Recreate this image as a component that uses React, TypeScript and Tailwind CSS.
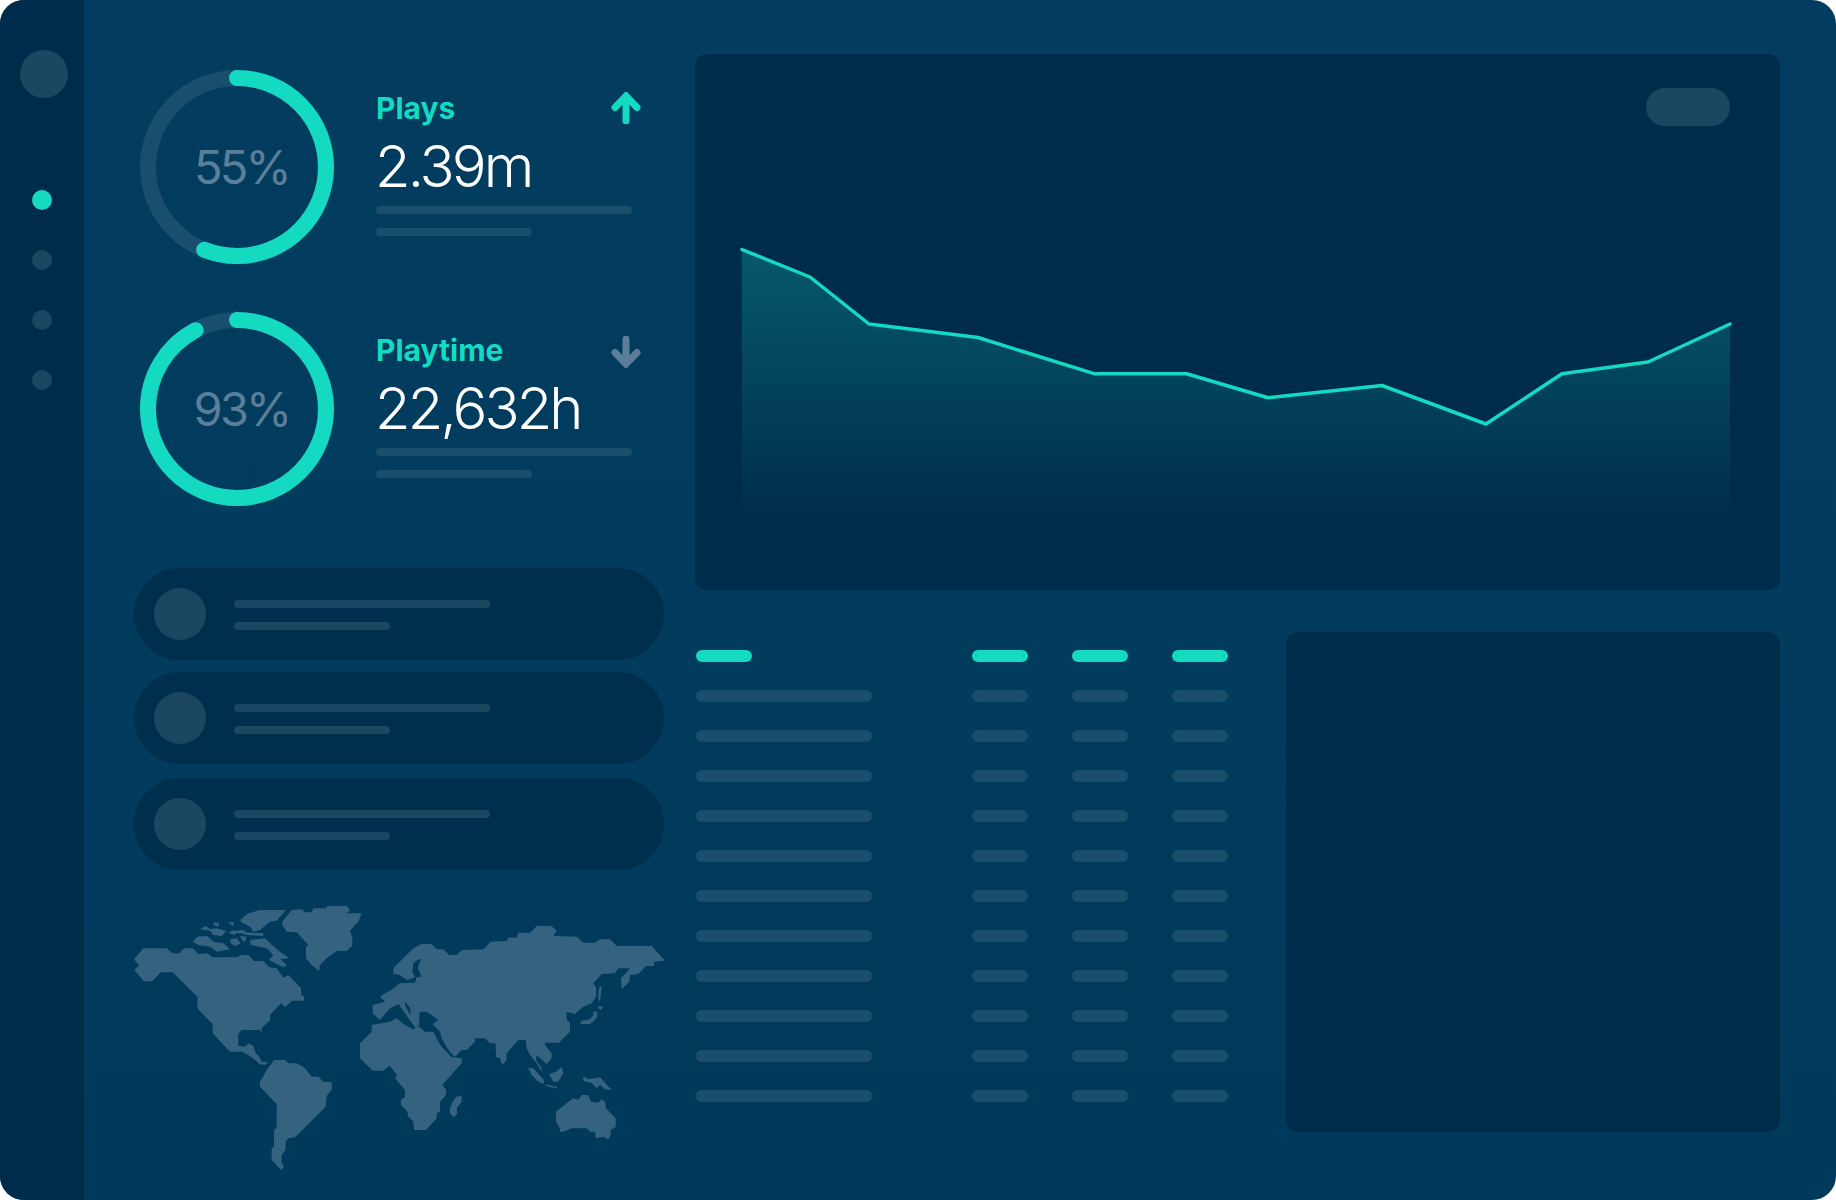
const teal = "#14dac2";

function Ring({ pct, label }: { pct: number; label: string }) {
  return (
    <div className="relative w-[194px] h-[194px] shrink-0">
      <svg width="194" height="194" viewBox="0 0 194 194" className="block">
        <circle cx="97" cy="97" r="89" fill="none" stroke="#1a4e6d" strokeWidth="16" />
        <circle
          cx="97"
          cy="97"
          r="89"
          fill="none"
          stroke={teal}
          strokeWidth="16"
          strokeLinecap="round"
          pathLength={100}
          strokeDasharray={`${pct} ${100 - pct}`}
          transform="rotate(-90 97 97)"
        />
      </svg>
      <div className="absolute inset-0 flex items-center justify-center pl-[9px] pb-[2px] text-[47px] leading-none tracking-[-0.06em] text-[#5b7f98] font-['Inter',sans-serif] font-normal">
        {label}
      </div>
    </div>
  );
}

function Arrow({ up }: { up: boolean }) {
  return (
    <svg width="30" height="32" viewBox="0 0 30 32" className={up ? "block" : "block mt-[4px]"}>
      {up ? (
        <path d="M15 29V5M4 15.5L15 4L26 15.5" fill="none" stroke={teal} strokeWidth="7" strokeLinecap="round" strokeLinejoin="miter" />
      ) : (
        <path d="M15 3V27M4 16.5L15 28L26 16.5" fill="none" stroke="#5b7f98" strokeWidth="7" strokeLinecap="round" strokeLinejoin="miter" />
      )}
    </svg>
  );
}

function Stat({ pct, pctLabel, title, value, up }: { pct: number; pctLabel: string; title: string; value: string; up: boolean }) {
  return (
    <div className="flex ml-[6px] h-[194px]">
      <Ring pct={pct} label={pctLabel} />
      <div className="ml-[42px] w-[265px] pt-[20px] font-['Inter',sans-serif]">
        <div className="flex items-center justify-between h-[36px]">
          <span className="text-[30px] leading-none font-bold tracking-normal text-[#14dac2]">{title}</span>
          <Arrow up={up} />
        </div>
        <div className="h-[60px] -ml-[1px] flex items-center text-[58px] leading-none font-[280] tracking-[-0.05em] text-white mt-[10px]">{value}</div>
        <div className="mt-[10px] w-[256px] h-[8px] rounded-full bg-[#1a4e6d]" />
        <div className="mt-[14px] w-[156px] h-[8px] rounded-full bg-[#1a4e6d]" />
      </div>
    </div>
  );
}

function Pill({ className }: { className: string }) {
  return (
    <div className={`flex items-center h-[92px] rounded-full bg-[#002e4d] pl-[20px] ${className}`}>
      <div className="w-[52px] h-[52px] rounded-full bg-[#1b4761]" />
      <div className="ml-[28px] flex flex-col gap-[14px] mt-[2px]">
        <div className="w-[256px] h-[8px] rounded-full bg-[#1b4761]" />
        <div className="w-[156px] h-[8px] rounded-full bg-[#1b4761]" />
      </div>
    </div>
  );
}

function WorldMap() {
  const america: string[] = [
    "42,238 70,205 140,205 157,220 178,220 192,205 218,205 235,222 262,220 278,232 350,232 365,225 385,225 402,243 430,243 447,262 470,265 490,293 505,285 543,325 543,343 552,350 552,362 517,362 495,380 483,370 450,405 450,420 425,445 425,460 420,450 365,450 355,462 355,498 375,500 385,490 400,498 407,520 418,530 425,545 445,547 435,555 420,553 405,540 385,525 365,515 330,515 278,460 278,433 232,385 232,350 158,277 122,277 97,304 72,304 43,270 57,256",
    "390,180 435,175 462,200 480,215 508,235 480,237 500,255 490,262 447,240 460,225 440,205 392,195",
    "362,118 385,100 420,90 497,90 470,122 450,125 420,150 400,155 390,140 362,125",
    "487,125 515,90 545,88 555,97 575,97 580,85 618,85 622,78 680,78 690,90 680,100 725,100 715,125 690,152 697,175 697,197 680,213 650,213 620,235 600,255 597,273 575,255 558,235 558,200 565,195 530,157 500,155 487,135",
    "218,185 232,170 262,168 280,185 310,190 330,208 290,215 270,200 235,195",
    "240,147 258,138 270,147 290,145 318,153 305,168 280,165 270,152 250,150",
    "278,128 298,128 295,140 285,138",
    "325,128 342,125 340,138",
    "325,158 340,150 352,155 345,165",
    "348,152 370,150 378,157 430,160 430,168 380,165 365,160 350,160",
    "330,178 350,175 362,190 345,198 333,190",
    "360,168 380,170 378,178 370,187",
    "440,570 462,540 495,540 505,550 530,550 555,565 575,590 595,590 610,605 635,607 635,630 620,647 617,680 525,772 505,775 497,785 497,810 485,825 485,850 492,860 483,870 455,840 455,805 462,800 462,750 470,745 470,672 420,620 420,605",
  ];
  const old: string[] = [
    "30,430 65,395 65,375 120,365 140,355 165,375 190,388 205,378 225,395 250,395 262,420 275,440 305,472 335,475 335,490 290,540 277,555 288,570 288,585 270,605 270,635 260,640 260,655 228,690 193,690 190,665 175,650 172,635 153,615 153,600 165,590 165,570 135,535 142,525 118,497 100,512 68,512 30,475",
    "318,590 335,588 335,605 320,625 322,640 312,652 300,640 300,625 308,605",
    "750,258 755,260 750,305 745,300 745,275",
    "745,318 760,320 752,330 745,325",
    "730,335 742,335 740,355 720,372 690,372 695,362 720,358 730,345",
    "535,505 550,505 582,540 582,552 565,545 545,525",
    "583,552 620,560 622,565 595,560",
    "597,522 618,515 635,500 640,520 625,545 610,545",
    "697,535 705,530 715,538 750,532 785,570 765,568 750,555 740,565 725,548 705,545",
    "618,635 650,610 670,595 685,600 695,585 715,585 722,605 745,608 755,597 765,605 768,625 797,655 797,680 782,690 782,705 775,718 760,710 738,715 735,695 720,695 710,685 665,685 640,695 630,695 630,685 618,665",
  ];
  const eurasia =
    "M68 315 105 305 90 290 105 280 120 272 135 262 148 250 195 248 200 232 215 230 208 215 203 205 213 178 205 178 190 190 187 215 195 232 170 240 150 225 130 222 130 205 190 145 215 132 245 132 260 148 280 148 298 165 320 165 335 150 400 148 422 125 470 123 475 113 500 113 505 98 540 98 560 78 605 78 620 93 610 108 680 110 700 128 735 128 750 118 780 118 800 138 905 138 945 182 912 185 912 198 888 198 865 222 840 225 838 245 815 268 813 235 838 208 838 205 805 205 795 220 755 222 730 250 738 262 738 290 725 310 700 320 675 342 650 335 650 360 660 368 660 395 627 428 585 428 585 435 605 460 605 475 590 492 560 465 558 480 575 505 575 515 560 490 540 465 530 445 527 420 505 420 470 460 470 480 457 495 450 475 438 470 437 430 420 430 405 415 375 415 375 425 350 450 335 450 315 470 305 462 292 445 275 415 270 395 248 372 265 360 230 335 210 335 208 350 208 375 197 385 145 312 120 325 90 360 68 340Z M165 305 181 325 181 346 165 315Z";
  return (
    <svg width="540" height="300" viewBox="134 880 540 300" className="block mt-[10px]">
      <g transform="translate(120 880) scale(0.33333)" fill="#35637f">
        {america.map((p, i) => (
          <polygon key={i} points={p} />
        ))}
      </g>
      <g transform="translate(350 900) scale(0.33333)" fill="#35637f">
        {old.map((p, i) => (
          <polygon key={i} points={p} />
        ))}
        <path d={eurasia} fillRule="evenodd" />
      </g>
    </svg>
  );
}

function Chart() {
  const pts =
    "742,249.5 810,277 869,324 978,337.5 1094,373.7 1186.6,373.7 1268,397.7 1382,385.5 1486,424 1562,373.7 1648,362 1730,324";
  return (
    <svg width="1085" height="536" viewBox="695 54 1085 536" className="absolute inset-0 block">
      <defs>
        <linearGradient id="area" x1="0" y1="249" x2="0" y2="514" gradientUnits="userSpaceOnUse">
          <stop offset="0" stopColor="#14dac2" stopOpacity="0.26" />
          <stop offset="1" stopColor="#14dac2" stopOpacity="0.01" />
        </linearGradient>
      </defs>
      <polygon points={`${pts} 1730,514 742,514`} fill="url(#area)" />
      <polyline points={pts} fill="none" stroke="#14dac2" strokeWidth="3.5" strokeLinejoin="round" strokeLinecap="round" />
    </svg>
  );
}

function TableRow({ head }: { head?: boolean }) {
  const c = head ? "bg-[#14dac2]" : "bg-[#1a4e6d]";
  return (
    <div className="flex h-[12px]">
      <div className={`${head ? "w-[56px] mr-[220px]" : "w-[176px] mr-[100px]"} h-[12px] rounded-full ${c}`} />
      <div className={`w-[56px] mr-[44px] h-[12px] rounded-full ${c}`} />
      <div className={`w-[56px] mr-[44px] h-[12px] rounded-full ${c}`} />
      <div className={`w-[56px] h-[12px] rounded-full ${c}`} />
    </div>
  );
}

export default function App() {
  return (
    <div className="w-[1836px] h-[1200px] bg-white">
      <div className="flex w-full h-full rounded-[24px] overflow-hidden bg-gradient-to-b from-[#023c5f] to-[#003a5b]">
        <aside className="w-[84px] shrink-0 bg-[#002c4b] pl-[20px] pt-[50px]">
          <div className="w-[48px] h-[48px] rounded-full bg-[#1b4761]" />
          <div className="flex flex-col gap-[40px] ml-[12px] mt-[92px]">
            <div className="w-[20px] h-[20px] rounded-full bg-[#14dac2]" />
            <div className="w-[20px] h-[20px] rounded-full bg-[#1b4761]" />
            <div className="w-[20px] h-[20px] rounded-full bg-[#1b4761]" />
            <div className="w-[20px] h-[20px] rounded-full bg-[#1b4761]" />
          </div>
        </aside>
        <div className="w-[530px] ml-[50px] shrink-0 pt-[70px]">
          <div className="flex flex-col gap-[48px]">
            <Stat pct={56} pctLabel="55%" title="Plays" value="2.39m" up />
            <Stat pct={92.3} pctLabel="93%" title="Playtime" value="22,632h" up={false} />
          </div>
          <div className="mt-[62px]">
            <Pill className="mb-[12px]" />
            <Pill className="mb-[14px]" />
            <Pill className="" />
          </div>
          <WorldMap />
        </div>
        <div className="ml-[31px] w-[1085px] pt-[54px]">
          <div className="relative h-[536px] rounded-[12px] bg-[#002c4b]">
            <Chart />
            <div className="absolute right-[50px] top-[34px] w-[84px] h-[38px] rounded-full bg-[#1b4761]" />
          </div>
          <div className="mt-[42px] flex justify-between">
            <div className="pl-[1px] pt-[18px] flex flex-col gap-[28px]">
              <TableRow head />
              {Array.from({ length: 11 }).map((_, i) => (
                <TableRow key={i} />
              ))}
            </div>
            <div className="w-[494px] h-[500px] rounded-[12px] bg-[#002c4b]" />
          </div>
        </div>
      </div>
    </div>
  );
}
